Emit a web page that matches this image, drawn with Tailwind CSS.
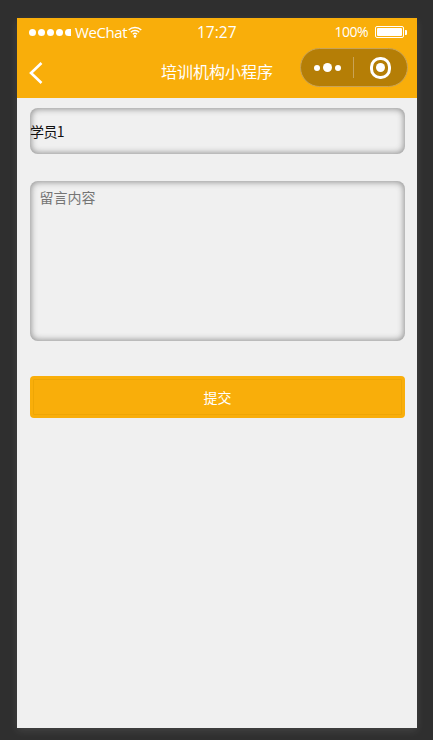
<!DOCTYPE html>
<html lang="zh">
<head>
<meta charset="utf-8">
<script src="https://cdn.jsdelivr.net/npm/@tailwindcss/browser@4"></script>
</head>
<body class="w-[433px] h-[740px] overflow-hidden bg-[#2f2f2f] font-['Open_Sans','Noto_Sans_CJK_SC',sans-serif]">
<div class="pt-[18px] pl-[17px]">
  <div class="w-[400px] h-[710px] bg-[#f0f0f0] flex flex-col shadow-[0_3px_8px_rgba(255,255,255,0.1)]">
    <header class="h-[80px] bg-[#f9ae0a] text-white flex flex-col shrink-0">
      <div class="relative h-[28px] flex items-center justify-between pl-[12px] pr-[10px] text-[15px] leading-[28px]">
        <div class="flex items-center">
          <div class="flex gap-[2px] items-center">
            <span class="w-[7px] h-[7px] rounded-full bg-white"></span>
            <span class="w-[7px] h-[7px] rounded-full bg-white"></span>
            <span class="w-[7px] h-[7px] rounded-full bg-white"></span>
            <span class="w-[7px] h-[7px] rounded-full bg-white"></span>
            <span class="w-[6px] h-[7px] rounded-l-full rounded-r-[3px] bg-white"></span>
          </div>
          <span class="ml-[4px] tracking-[-0.4px]">WeChat</span>
          <svg class="ml-[1px]" width="14" height="12" viewBox="0 0 14 12" fill="none" stroke="white" stroke-width="1.4">
            <path d="M0.7 4 C4 0.6 10 0.6 13.3 4"/>
            <path d="M2.8 6.2 C5 4 9 4 11.2 6.2"/>
            <path d="M4.9 8.2 C6 7.2 8 7.2 9.1 8.2"/>
            <circle cx="7" cy="10.4" r="1.3" fill="white" stroke="none"/>
          </svg>
        </div>
        <span class="absolute left-[180px] top-0 text-[15.5px]">17:27</span>
        <div class="flex items-center">
          <span class="text-[14px] tracking-[-0.5px]">100%</span>
          <div class="ml-[7px] w-[29px] h-[12px] border border-white rounded-[2px] p-[1px]">
            <div class="w-full h-full bg-white rounded-[1px]"></div>
          </div>
          <div class="w-[2px] h-[5px] bg-white rounded-r-[1px] ml-[1px]"></div>
        </div>
      </div>
      <div class="relative flex-1 flex items-center justify-center">
        <svg class="absolute left-[11px] top-[15px]" width="16" height="24" viewBox="0 0 16 24" fill="none" stroke="white" stroke-width="2.6">
          <path d="M13.5 2 L3 12 L13.5 22"/>
        </svg>
        <h1 class="text-[16px] leading-[20px] mt-[-1px] font-normal">培训机构小程序</h1>
        <div class="absolute left-[283px] top-[2px] w-[108px] h-[39px] rounded-full bg-[#b57e06] border border-[#c9a356] flex items-center">
          <div class="w-[52px] flex items-center justify-center gap-[3px]">
            <span class="w-[6px] h-[6px] rounded-full bg-white"></span>
            <span class="w-[9px] h-[9px] rounded-full bg-white"></span>
            <span class="w-[6px] h-[6px] rounded-full bg-white"></span>
          </div>
          <div class="w-px h-[21px] bg-[#c9a356]"></div>
          <div class="flex-1 flex items-center justify-center">
            <div class="w-[21px] h-[22px] rounded-[10px] border-[3px] border-white flex items-center justify-center">
              <span class="w-[9px] h-[9px] rounded-full bg-white"></span>
            </div>
          </div>
        </div>
      </div>
    </header>
    <main class="pt-[10px] px-[13px] flex flex-col">
      <input value="学员1" class="w-[375px] h-[46px] rounded-[8px] bg-[#f0f0f0] text-[14px] tracking-[-0.6px] text-[#111] outline-none shadow-[inset_0_0_6px_1px_#8f8f8f] font-['Noto_Sans_CJK_SC',sans-serif]">
      <textarea placeholder="留言内容" class="mt-[27px] w-[375px] h-[160px] rounded-[8px] bg-[#f0f0f0] text-[14px] leading-[20px] pt-[6px] pb-[7px] pl-[9.5px] pr-[10px] resize-none outline-none shadow-[inset_0_0_6px_1px_#8f8f8f] placeholder:text-[#757575] font-['Noto_Sans_CJK_SC',sans-serif]"></textarea>
      <button class="mt-[35px] w-[375px] h-[42px] rounded-[4px] bg-[#f9ae0a] outline outline-1 outline-offset-[-4px] outline-[#eea605] text-white text-[14px] pt-[1px] font-['Noto_Sans_CJK_SC',sans-serif]">提交</button>
    </main>
  </div>
</div>
</body>
</html>
